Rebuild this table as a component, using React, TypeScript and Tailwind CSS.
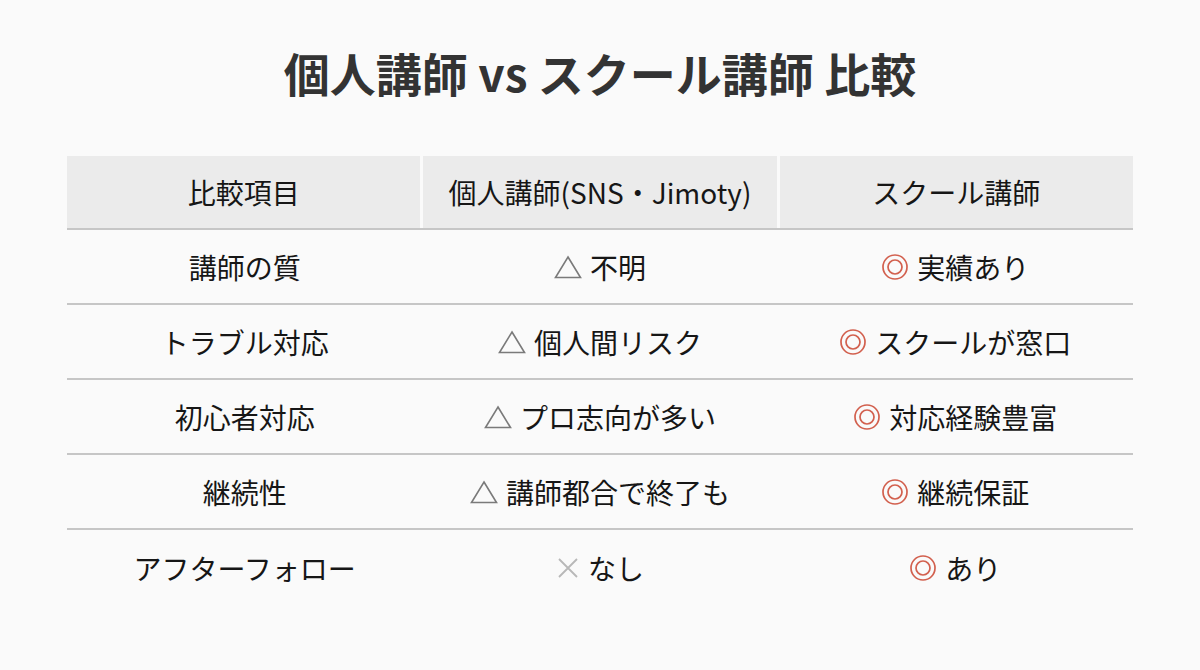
import React from "react";

type Mark = "tri" | "double" | "cross";

type Row = {
  item: string;
  personal: { mark: Mark; text: string };
  school: { mark: Mark; text: string };
};

const rows: Row[] = [
  { item: "講師の質", personal: { mark: "tri", text: "不明" }, school: { mark: "double", text: "実績あり" } },
  { item: "トラブル対応", personal: { mark: "tri", text: "個人間リスク" }, school: { mark: "double", text: "スクールが窓口" } },
  { item: "初心者対応", personal: { mark: "tri", text: "プロ志向が多い" }, school: { mark: "double", text: "対応経験豊富" } },
  { item: "継続性", personal: { mark: "tri", text: "講師都合で終了も" }, school: { mark: "double", text: "継続保証" } },
  { item: "アフターフォロー", personal: { mark: "cross", text: "なし" }, school: { mark: "double", text: "あり" } },
];

const font = { fontFamily: '"Noto Sans CJK JP", "Noto Sans", sans-serif' };

const MarkIcon = ({ mark }: { mark: Mark }) => {
  if (mark === "tri") {
    return (
      <svg width="28" height="24" viewBox="0 0 28 24" className="shrink-0">
        <path d="M14 2 L26.5 22.5 L1.5 22.5 Z" fill="none" stroke="#7a7a7a" strokeWidth="1.6" />
      </svg>
    );
  }
  if (mark === "double") {
    return (
      <svg width="28" height="28" viewBox="0 0 28 28" className="shrink-0">
        <circle cx="14" cy="14" r="12" fill="none" stroke="#d2604e" strokeWidth="1.7" />
        <circle cx="14" cy="14" r="7" fill="none" stroke="#d2604e" strokeWidth="1.7" />
      </svg>
    );
  }
  return (
    <svg width="24" height="24" viewBox="0 0 24 24" className="shrink-0">
      <path d="M3 3 L21 21 M21 3 L3 21" stroke="#b8b8b8" strokeWidth="1.8" />
    </svg>
  );
};

const Cell = ({ mark, text }: { mark: Mark; text: string }) => (
  <div className="flex items-center justify-center gap-[8px]">
    <MarkIcon mark={mark} />
    <span>{text}</span>
  </div>
);

export default function App() {
  return (
    <div className="w-[1200px] h-[670px] bg-[#fafafa] text-[#161616]" style={font}>
      <h1 className="pt-[42px] h-[156px] text-center text-[46px] leading-[60px] font-bold text-[#333333]">
        個人講師 vs スクール講師 比較
      </h1>
      <div className="mx-[67px] text-[28px]">
        <div className="grid grid-cols-3 gap-[3px] h-[74px] bg-[#fafafa] border-b-2 border-[#c6c6c6]">
          <div className="flex items-center justify-center bg-[#ebebeb]">比較項目</div>
          <div className="flex items-center justify-center bg-[#ebebeb]">個人講師(SNS・Jimoty)</div>
          <div className="flex items-center justify-center bg-[#ebebeb]">スクール講師</div>
        </div>
        {rows.map((r, i) => (
          <div
            key={r.item}
            className={
              i < rows.length - 1
                ? "grid grid-cols-3 h-[75px] border-b-2 border-[#c6c6c6]"
                : "grid grid-cols-3 h-[75px]"
            }
          >
            <div className="flex items-center justify-center">{r.item}</div>
            <Cell mark={r.personal.mark} text={r.personal.text} />
            <Cell mark={r.school.mark} text={r.school.text} />
          </div>
        ))}
      </div>
    </div>
  );
}
